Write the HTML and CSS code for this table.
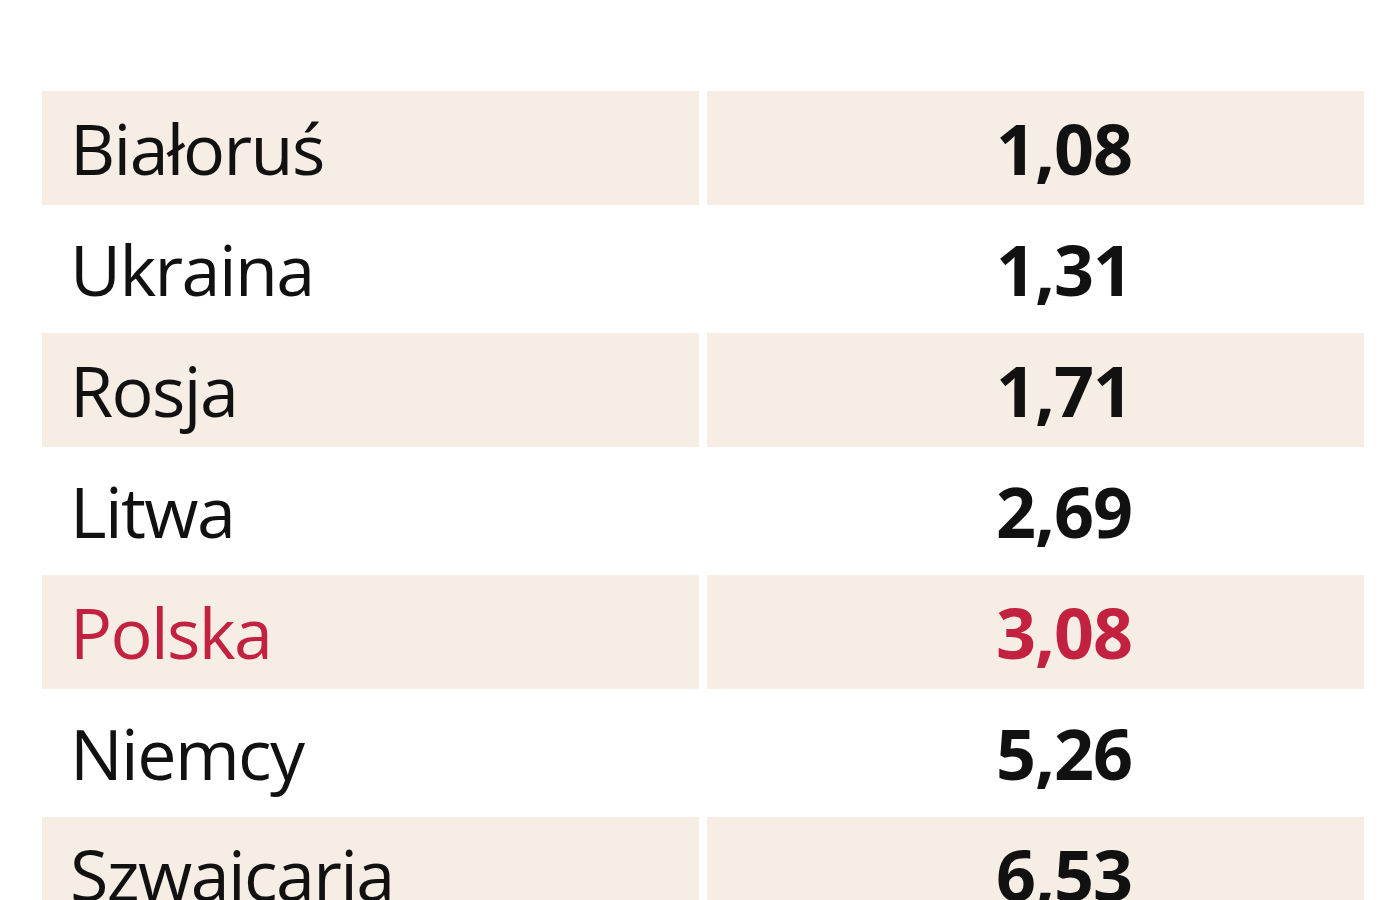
FILE: index.html
```html
<!DOCTYPE html>
<html lang="pl">
<head>
    <meta charset="UTF-8">
    <meta name="viewport" content="width=device-width, initial-scale=1.0">
    <title>Tabela</title>
    <link rel="stylesheet" href="styles.css">
</head>
<body>

<div class="table">
    <div class="row shaded">
        <div class="cell name">Białoruś</div>
        <div class="cell value">1,08</div>
    </div>
    <div class="row">
        <div class="cell name">Ukraina</div>
        <div class="cell value">1,31</div>
    </div>
    <div class="row shaded">
        <div class="cell name">Rosja</div>
        <div class="cell value">1,71</div>
    </div>
    <div class="row">
        <div class="cell name">Litwa</div>
        <div class="cell value">2,69</div>
    </div>
    <div class="row shaded highlight">
        <div class="cell name">Polska</div>
        <div class="cell value">3,08</div>
    </div>
    <div class="row">
        <div class="cell name">Niemcy</div>
        <div class="cell value">5,26</div>
    </div>
    <div class="row shaded">
        <div class="cell name">Szwajcaria</div>
        <div class="cell value">6,53</div>
    </div>
</div>

</body>
</html>
```

FILE: styles.css
```css
body {
    margin: 0;
    background: #fff;
    font-family: "Open Sans", "Noto Sans", sans-serif;
    color: #111;
    height: 900px;
    overflow: hidden;
}
.table {
    display: flex;
    flex-direction: column;
    gap: 7px;
    margin: 91px 36px 0 42px;
}
.row {
    display: grid;
    grid-template-columns: 1fr 1fr;
    column-gap: 8px;
}
.cell {
    height: 114px;
    display: flex;
    align-items: center;
    font-size: 70px;
}
.shaded .cell {
    background: #f6ede4;
}
.name {
    padding-left: 28px;
    letter-spacing: -1.6px;
}
.value {
    justify-content: flex-end;
    padding-right: 232px;
    font-weight: 700;
    letter-spacing: -1px;
}
.highlight .cell {
    color: #c2223f;
}
```
